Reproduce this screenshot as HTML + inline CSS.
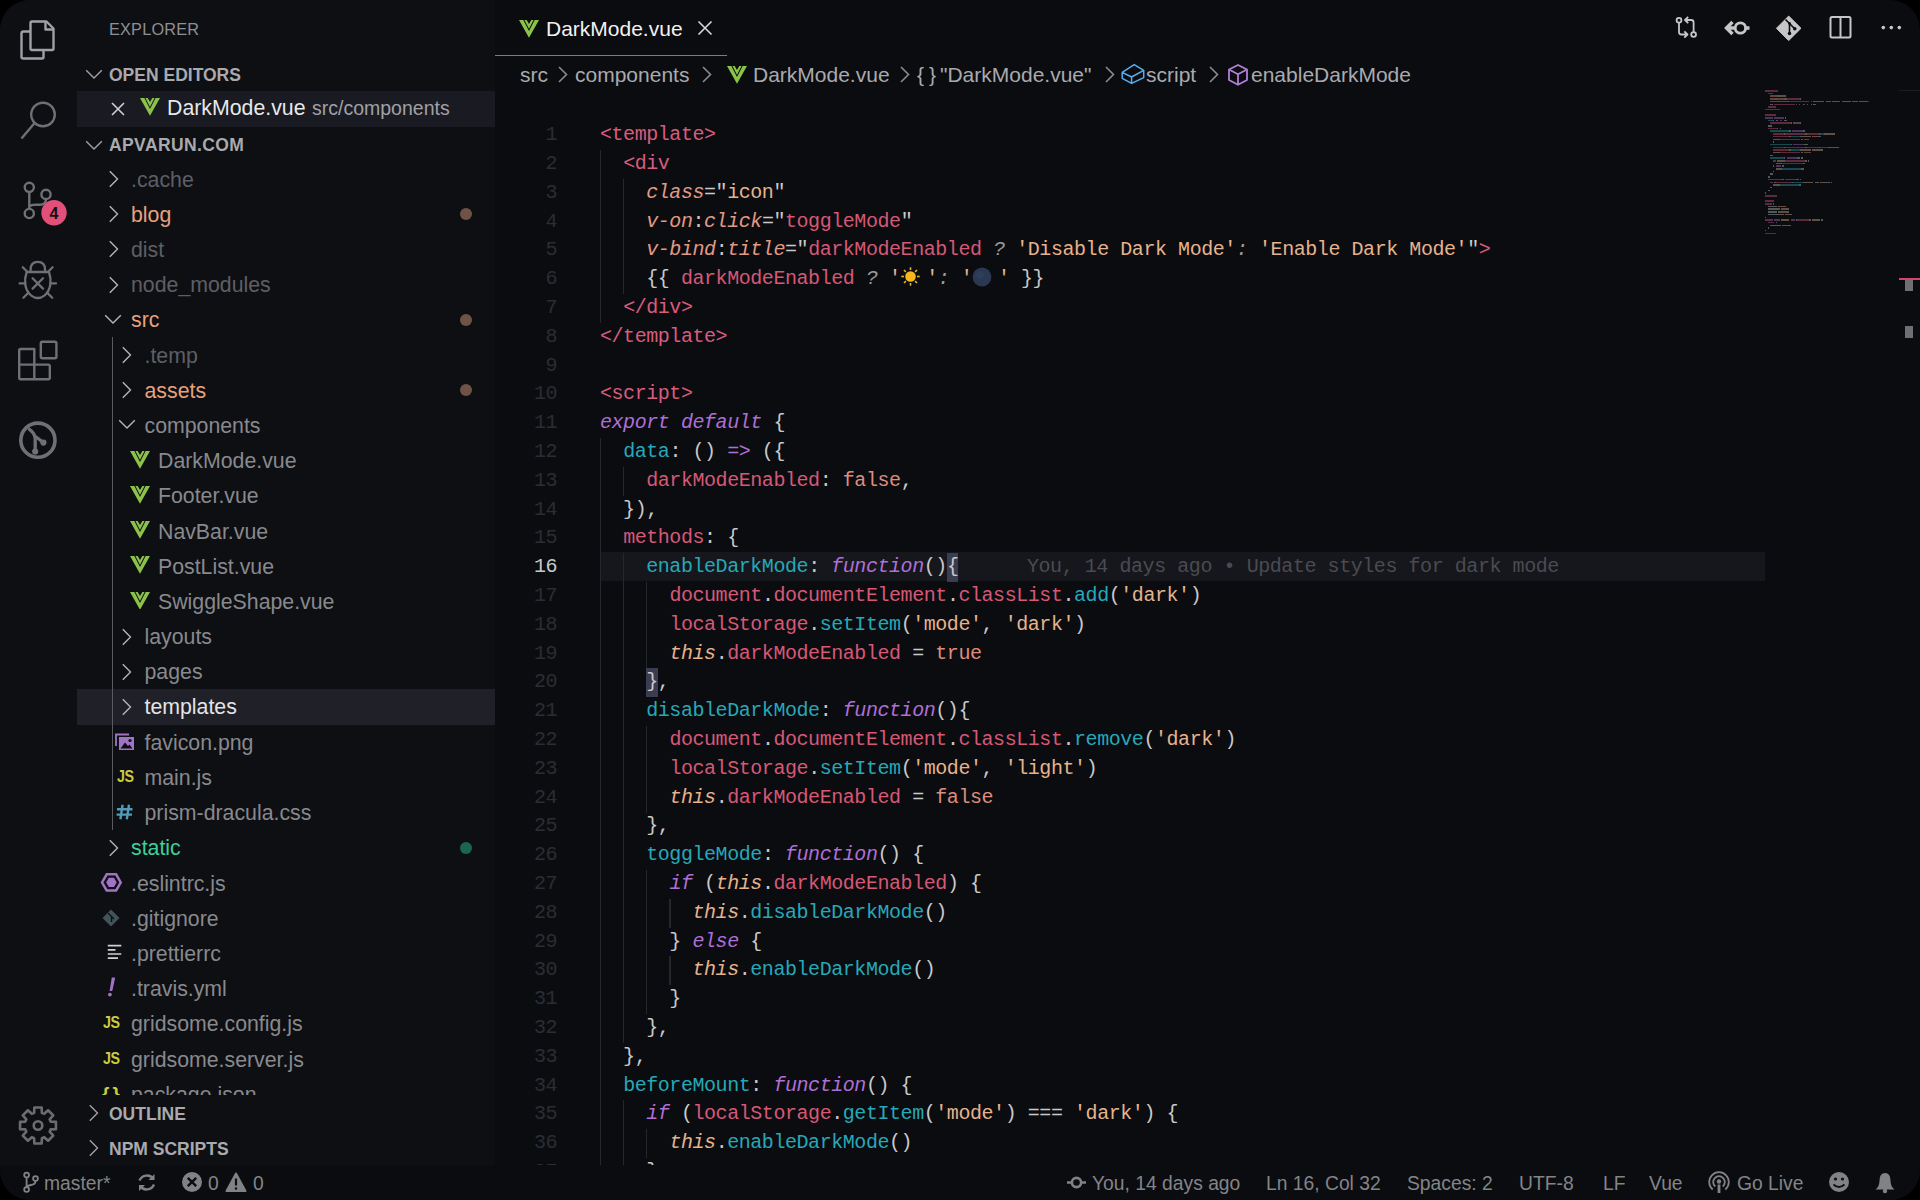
<!DOCTYPE html><html><head><meta charset="utf-8"><style>
*{box-sizing:border-box}
html,body{margin:0;padding:0;background:#000;width:1920px;height:1200px;overflow:hidden}
#win{position:absolute;left:0;top:0;width:1920px;height:1200px;border-radius:30px;overflow:hidden;background:#0b0c10;font-family:"Liberation Sans",sans-serif}
.abs{position:absolute}
#act{position:absolute;left:0;top:0;width:77px;height:1165px;background:#0e0f13}
#side{position:absolute;left:77px;top:0;width:417.6px;height:1165px;background:#0e0f13;overflow:hidden}
#status{position:absolute;left:0;top:1165px;width:1920px;height:35px;background:#0b0c0f;color:#838488;font-size:19.3px}
.row{position:absolute;left:0;width:418px;height:35.2px;line-height:35.2px;font-size:21.3px;white-space:nowrap;color:#88898d}
.hdr{position:absolute;left:0;width:418px;height:35.2px;line-height:35.2px;font-size:17.5px;font-weight:bold;color:#a9aaae;white-space:nowrap}
.ico{position:absolute}
.code{position:absolute;left:600px;top:0;font-family:"Liberation Mono",monospace;font-size:20px;letter-spacing:-0.44px;white-space:pre;color:#c9c9c9}
.ln{position:absolute;left:495px;width:62px;text-align:right;font-family:"Liberation Mono",monospace;font-size:20px;letter-spacing:-0.44px;color:#3b3c41}
.cl{position:absolute;left:0;height:28.8px;line-height:28.8px}
.t{color:#da5b7d}.a{color:#e39a84;font-style:italic}.p{color:#c9c9c9}.s{color:#e6b38c}.v{color:#d65876}
.k{color:#b06fd6;font-style:italic}.o{color:#b06fd6}.f{color:#26a8b8}.th{color:#e6b38c;font-style:italic}
.q{color:#9a9a9a;font-style:italic}.b{color:#de8d7c}
</style></head><body><div id="win">
<div id="act">
<svg class="abs" style="left:0;top:0" width="77" height="480" viewBox="0 0 77 480" fill="none" stroke-width="2.4">
 <g stroke="#a0a1a6" stroke-linejoin="round">
  <path d="M30.5 31.5 H23.5 Q21.5 31.5 21.5 33.5 V57 Q21.5 58.5 23.5 58.5 H42 Q43.5 58.5 43.5 57 V50.5"/>
  <path d="M32 21.5 H46.5 L53.5 28.5 V48.5 Q53.5 50 52 50 H32 Q30.5 50 30.5 48.5 V23 Q30.5 21.5 32 21.5 Z"/>
  <path d="M45.5 21.5 V29.5 H53.5"/>
 </g>
 <g stroke="#6f7075">
  <circle cx="43" cy="114.5" r="11.8"/>
  <path d="M34.6 123 L21.5 138.5"/>
  <circle cx="29.3" cy="187.3" r="4.6"/>
  <circle cx="46" cy="194.4" r="4.6"/>
  <circle cx="29.3" cy="213.5" r="4.6"/>
  <path d="M29.3 192 V209"/>
  <path d="M29.3 206.5 Q31 204.7 35 204.7 H40 Q46 204.7 46 199"/>
 </g>
 <circle cx="54" cy="212.7" r="12.7" fill="#e2507a"/>
 <text x="54" y="218.5" text-anchor="middle" font-family="Liberation Sans" font-size="16" font-weight="bold" fill="#111">4</text>
 <g stroke="#6f7075" stroke-linecap="round" stroke-width="2.3">
  <path d="M30.6 272 V269.5 Q30.6 261.8 37.8 261.8 Q45 261.8 45 269.5 V272"/>
  <path d="M26.7 272 H49 C51.8 280 51.2 290 44.3 295.6 C40.3 298.6 35.3 298.6 31.3 295.6 C24.4 290 23.8 280 26.7 272 Z" stroke-linejoin="round"/>
  <path d="M32.6 278.2 L43 288.6 M43 278.2 L32.6 288.6"/>
  <path d="M22.8 267.3 L27 271.5 M52.6 267.3 L48.4 271.5 M19.6 283.4 H25.2 M56 283.4 H50.4 M23.4 297.8 L28.4 292.8 M52.2 297.8 L47.2 292.8"/>
 </g>
 <g stroke="#6f7075" stroke-linejoin="round">
  <rect x="40.8" y="341.8" width="15.6" height="16.4" rx="1.5"/>
  <path d="M19.2 350.5 Q19.2 349 20.7 349 H34.3 V364.6 H48.3 Q49.8 364.6 49.8 366.1 V377.8 Q49.8 379.3 48.3 379.3 H20.7 Q19.2 379.3 19.2 377.8 Z"/>
  <path d="M19.2 364.6 H34.3 V379.3"/>
 </g>
 <g stroke="#6f7075">
  <circle cx="37.9" cy="440.2" r="17.1" stroke-width="3.6"/>
  <path d="M29.4 429.4 Q34.6 433 35.2 438.5 V451 M35.5 436.5 Q39.5 439.5 43.4 442.6" stroke-width="3.3" stroke-linecap="round"/>
 </g>
 <g fill="#6f7075">
  <circle cx="35.2" cy="451.5" r="3.1"/>
  <circle cx="43.4" cy="442.6" r="3.1"/>
 </g>
</svg>
<svg class="abs" style="left:0;top:1090px" width="77" height="70" viewBox="0 1090 77 70" fill="none" stroke="#6a6c70" stroke-width="2.6" stroke-linejoin="round"><path d="M34.10 1112.89 L34.36 1107.56 L41.64 1107.56 L41.90 1112.89 L44.16 1113.82 L48.11 1110.25 L53.25 1115.39 L49.68 1119.34 L50.61 1121.60 L55.94 1121.86 L55.94 1129.14 L50.61 1129.40 L49.68 1131.66 L53.25 1135.61 L48.11 1140.75 L44.16 1137.18 L41.90 1138.11 L41.64 1143.44 L34.36 1143.44 L34.10 1138.11 L31.84 1137.18 L27.89 1140.75 L22.75 1135.61 L26.32 1131.66 L25.39 1129.40 L20.06 1129.14 L20.06 1121.86 L25.39 1121.60 L26.32 1119.34 L22.75 1115.39 L27.89 1110.25 L31.84 1113.82Z"/><circle cx="38" cy="1125.5" r="4.3"/></svg>
</div>
<div id="side"><div class="abs" style="left:32px;top:19.5px;font-size:16.3px;color:#8e8f93;letter-spacing:0.2px">EXPLORER</div><div class="hdr" style="top:57.5px"><svg class="ico" style="left:8px;top:10.5px" width="18" height="12" viewBox="0 0 18 12"><path d="M1.2 2.2 L9 10 L16.8 2.2" fill="none" stroke="#a0a1a5" stroke-width="1.4"/></svg><span class="abs" style="left:32px">OPEN EDITORS</span></div><div class="row" style="top:90.9px;height:35.8px;background:#1a1a22;color:#e8e8e8"><svg class="ico" style="left:34px;top:11px" width="14" height="14" viewBox="0 0 14 14"><path d="M1 1 L13 13 M13 1 L1 13" stroke="#d0d0d0" stroke-width="1.6"/></svg><svg class="ico" style="left:63.4px;top:7.3px" width="20" height="17.75" viewBox="0 0 261.76 226.69" preserveAspectRatio="none"><path fill="#8bc34a" d="M161.096.001l-30.224 52.35L100.647.002H-.005L130.872 226.69 261.749 0z"/><path fill="none" stroke="#1a1b22" stroke-width="13" d="M62 -4 L130.872 128 L199.7 -4"/></svg><span class="abs" style="left:90px">DarkMode.vue</span><span class="abs" style="left:235px;color:#a0a1a5;font-size:19.5px">src/components</span></div><div class="hdr" style="top:128px"><svg class="ico" style="left:8px;top:11px" width="18" height="12" viewBox="0 0 18 12"><path d="M1.2 2.2 L9 10 L16.8 2.2" fill="none" stroke="#a0a1a5" stroke-width="1.4"/></svg><span class="abs" style="left:32px;letter-spacing:0.4px">APVARUN.COM</span></div><div class="abs" style="left:0;top:0;width:418px;height:1095px;overflow:hidden"><div class="row" style="top:161.5px;"><svg class="ico" style="left:30.5px;top:8.600000000000001px" width="12" height="18" viewBox="0 0 12 18"><path d="M1.8 1.2 L9.5 9 L1.8 16.8" fill="none" stroke="#b4b5b8" stroke-width="1.4"/></svg><span class="abs" style="left:54.0px;top:1px;color:#5d5f64">.cache</span></div><div class="row" style="top:196.7px;"><svg class="ico" style="left:30.5px;top:8.600000000000001px" width="12" height="18" viewBox="0 0 12 18"><path d="M1.8 1.2 L9.5 9 L1.8 16.8" fill="none" stroke="#b4b5b8" stroke-width="1.4"/></svg><span class="abs" style="left:54.0px;top:1px;color:#e8a17d">blog</span><div class="abs" style="left:383.3px;top:11.5px;width:12px;height:12px;border-radius:6px;background:#6f5446"></div></div><div class="row" style="top:231.9px;"><svg class="ico" style="left:30.5px;top:8.600000000000001px" width="12" height="18" viewBox="0 0 12 18"><path d="M1.8 1.2 L9.5 9 L1.8 16.8" fill="none" stroke="#b4b5b8" stroke-width="1.4"/></svg><span class="abs" style="left:54.0px;top:1px;color:#5d5f64">dist</span></div><div class="row" style="top:267.1px;"><svg class="ico" style="left:30.5px;top:8.600000000000001px" width="12" height="18" viewBox="0 0 12 18"><path d="M1.8 1.2 L9.5 9 L1.8 16.8" fill="none" stroke="#b4b5b8" stroke-width="1.4"/></svg><span class="abs" style="left:54.0px;top:1px;color:#5d5f64">node_modules</span></div><div class="row" style="top:302.3px;"><svg class="ico" style="left:27.0px;top:10.600000000000001px" width="18" height="12" viewBox="0 0 18 12"><path d="M1.2 2.2 L9 10 L16.8 2.2" fill="none" stroke="#b4b5b8" stroke-width="1.4"/></svg><span class="abs" style="left:54.0px;top:1px;color:#e8a17d">src</span><div class="abs" style="left:383.3px;top:11.5px;width:12px;height:12px;border-radius:6px;background:#6f5446"></div></div><div class="row" style="top:337.5px;"><svg class="ico" style="left:44.0px;top:8.600000000000001px" width="12" height="18" viewBox="0 0 12 18"><path d="M1.8 1.2 L9.5 9 L1.8 16.8" fill="none" stroke="#b4b5b8" stroke-width="1.4"/></svg><span class="abs" style="left:67.5px;top:1px;color:#5d5f64">.temp</span></div><div class="row" style="top:372.7px;"><svg class="ico" style="left:44.0px;top:8.600000000000001px" width="12" height="18" viewBox="0 0 12 18"><path d="M1.8 1.2 L9.5 9 L1.8 16.8" fill="none" stroke="#b4b5b8" stroke-width="1.4"/></svg><span class="abs" style="left:67.5px;top:1px;color:#e8a17d">assets</span><div class="abs" style="left:383.3px;top:11.5px;width:12px;height:12px;border-radius:6px;background:#6f5446"></div></div><div class="row" style="top:407.9px;"><svg class="ico" style="left:40.5px;top:10.600000000000001px" width="18" height="12" viewBox="0 0 18 12"><path d="M1.2 2.2 L9 10 L16.8 2.2" fill="none" stroke="#b4b5b8" stroke-width="1.4"/></svg><span class="abs" style="left:67.5px;top:1px;color:#88898d">components</span></div><div class="row" style="top:443.1px;"><svg class="ico" style="left:53.4px;top:7.8px" width="20" height="17.75" viewBox="0 0 261.76 226.69" preserveAspectRatio="none"><path fill="#8bc34a" d="M161.096.001l-30.224 52.35L100.647.002H-.005L130.872 226.69 261.749 0z"/><path fill="none" stroke="#0e0f13" stroke-width="13" d="M62 -4 L130.872 128 L199.7 -4"/></svg><span class="abs" style="left:81.0px;top:1px;color:#88898d">DarkMode.vue</span></div><div class="row" style="top:478.3px;"><svg class="ico" style="left:53.4px;top:7.8px" width="20" height="17.75" viewBox="0 0 261.76 226.69" preserveAspectRatio="none"><path fill="#8bc34a" d="M161.096.001l-30.224 52.35L100.647.002H-.005L130.872 226.69 261.749 0z"/><path fill="none" stroke="#0e0f13" stroke-width="13" d="M62 -4 L130.872 128 L199.7 -4"/></svg><span class="abs" style="left:81.0px;top:1px;color:#88898d">Footer.vue</span></div><div class="row" style="top:513.5px;"><svg class="ico" style="left:53.4px;top:7.8px" width="20" height="17.75" viewBox="0 0 261.76 226.69" preserveAspectRatio="none"><path fill="#8bc34a" d="M161.096.001l-30.224 52.35L100.647.002H-.005L130.872 226.69 261.749 0z"/><path fill="none" stroke="#0e0f13" stroke-width="13" d="M62 -4 L130.872 128 L199.7 -4"/></svg><span class="abs" style="left:81.0px;top:1px;color:#88898d">NavBar.vue</span></div><div class="row" style="top:548.7px;"><svg class="ico" style="left:53.4px;top:7.8px" width="20" height="17.75" viewBox="0 0 261.76 226.69" preserveAspectRatio="none"><path fill="#8bc34a" d="M161.096.001l-30.224 52.35L100.647.002H-.005L130.872 226.69 261.749 0z"/><path fill="none" stroke="#0e0f13" stroke-width="13" d="M62 -4 L130.872 128 L199.7 -4"/></svg><span class="abs" style="left:81.0px;top:1px;color:#88898d">PostList.vue</span></div><div class="row" style="top:583.9px;"><svg class="ico" style="left:53.4px;top:7.8px" width="20" height="17.75" viewBox="0 0 261.76 226.69" preserveAspectRatio="none"><path fill="#8bc34a" d="M161.096.001l-30.224 52.35L100.647.002H-.005L130.872 226.69 261.749 0z"/><path fill="none" stroke="#0e0f13" stroke-width="13" d="M62 -4 L130.872 128 L199.7 -4"/></svg><span class="abs" style="left:81.0px;top:1px;color:#88898d">SwiggleShape.vue</span></div><div class="row" style="top:619.1px;"><svg class="ico" style="left:44.0px;top:8.600000000000001px" width="12" height="18" viewBox="0 0 12 18"><path d="M1.8 1.2 L9.5 9 L1.8 16.8" fill="none" stroke="#b4b5b8" stroke-width="1.4"/></svg><span class="abs" style="left:67.5px;top:1px;color:#88898d">layouts</span></div><div class="row" style="top:654.3px;"><svg class="ico" style="left:44.0px;top:8.600000000000001px" width="12" height="18" viewBox="0 0 12 18"><path d="M1.8 1.2 L9.5 9 L1.8 16.8" fill="none" stroke="#b4b5b8" stroke-width="1.4"/></svg><span class="abs" style="left:67.5px;top:1px;color:#88898d">pages</span></div><div class="row" style="top:689.5px;background:#202029;height:36.2px;margin-top:-0.6px;"><svg class="ico" style="left:44.0px;top:8.600000000000001px" width="12" height="18" viewBox="0 0 12 18"><path d="M1.8 1.2 L9.5 9 L1.8 16.8" fill="none" stroke="#b4b5b8" stroke-width="1.4"/></svg><span class="abs" style="left:67.5px;top:1px;color:#e4e4e6">templates</span></div><div class="row" style="top:724.7px;"><svg class="ico" style="left:37.5px;top:8px" width="20" height="18" viewBox="0 0 20 18"><path d="M1 13 V1.5 H14" fill="none" stroke="#a074c4" stroke-width="1.8"/><rect x="4" y="4" width="15" height="13" fill="#a074c4"/><path d="M5.5 15.5 L10 9.5 L13 13 L14.5 11.5 L17.5 15.5 Z" fill="#0e0f13"/><circle cx="15" cy="7.5" r="1.6" fill="#0e0f13"/></svg><span class="abs" style="left:67.5px;top:1px;color:#88898d">favicon.png</span></div><div class="row" style="top:759.9px;"><span class="abs" style="left:39.5px;top:-1px;font-size:17px;font-weight:bold;color:#cbcb41;letter-spacing:-0.5px;transform:scaleX(0.84);transform-origin:0 0">JS</span><span class="abs" style="left:67.5px;top:1px;color:#88898d">main.js</span></div><div class="row" style="top:795.1px;"><svg class="ico" style="left:39px;top:9px" width="18" height="16" viewBox="0 0 18 16" stroke="#519aba" stroke-width="2.4"><path d="M6.6 0.8 L4.4 15.2 M13 0.8 L10.8 15.2 M1 5.3 H16.5 M0.6 10.6 H16"/></svg><span class="abs" style="left:67.5px;top:1px;color:#88898d">prism-dracula.css</span></div><div class="row" style="top:830.3px;"><svg class="ico" style="left:30.5px;top:8.600000000000001px" width="12" height="18" viewBox="0 0 12 18"><path d="M1.8 1.2 L9.5 9 L1.8 16.8" fill="none" stroke="#b4b5b8" stroke-width="1.4"/></svg><span class="abs" style="left:54.0px;top:1px;color:#3ecf98">static</span><div class="abs" style="left:383.3px;top:11.5px;width:12px;height:12px;border-radius:6px;background:#1c664d"></div></div><div class="row" style="top:865.5px;"><svg class="ico" style="left:22px;top:4px" width="24" height="24" viewBox="0 0 24 24"><polygon points="23.20,12.40 17.80,21.75 7.00,21.75 1.60,12.40 7.00,3.05 17.80,3.05" fill="#a074c4"/><polygon points="19.00,12.40 15.70,18.12 9.10,18.12 5.80,12.40 9.10,6.68 15.70,6.68" fill="none" stroke="#0e0f13" stroke-width="2.3"/></svg><span class="abs" style="left:54.0px;top:1px;color:#88898d">.eslintrc.js</span></div><div class="row" style="top:900.7px;"><svg class="ico" style="left:25.0px;top:8px" width="18" height="18" viewBox="0 0 18 18"><path d="M9 0.5 L17.5 9 L9 17.5 L0.5 9Z" fill="#41535b"/><path d="M6 4 L9.5 7.5 V13 M9.5 7.5 L12 10" stroke="#0e0f13" stroke-width="1.4" fill="none"/></svg><span class="abs" style="left:54.0px;top:1px;color:#88898d">.gitignore</span></div><div class="row" style="top:935.9px;"><svg class="ico" style="left:30px;top:8px" width="16" height="16" viewBox="0 0 16 16" stroke="#d0d0d0" stroke-width="1.7"><path d="M0.8 1.6 H14.3 M0.8 5.8 H8.5 M0.8 10 H14.3 M0.8 14.2 H11"/></svg><span class="abs" style="left:54.0px;top:1px;color:#88898d">.prettierrc</span></div><div class="row" style="top:971.1px;"><svg class="ico" style="left:29px;top:5px" width="12" height="22" viewBox="0 0 12 22"><polygon points="5.8,1.5 9.2,1.5 6.3,15 3.6,15" fill="#a074c4"/><circle cx="3.9" cy="18.6" r="1.9" fill="#a074c4"/></svg><span class="abs" style="left:54.0px;top:1px;color:#88898d">.travis.yml</span></div><div class="row" style="top:1006.3px;"><span class="abs" style="left:26.0px;top:-1px;font-size:17px;font-weight:bold;color:#cbcb41;letter-spacing:-0.5px;transform:scaleX(0.84);transform-origin:0 0">JS</span><span class="abs" style="left:54.0px;top:1px;color:#88898d">gridsome.config.js</span></div><div class="row" style="top:1041.5px;"><span class="abs" style="left:26.0px;top:-1px;font-size:17px;font-weight:bold;color:#cbcb41;letter-spacing:-0.5px;transform:scaleX(0.84);transform-origin:0 0">JS</span><span class="abs" style="left:54.0px;top:1px;color:#88898d">gridsome.server.js</span></div><div class="row" style="top:1076.7px;"><span class="abs" style="left:25.0px;top:-1px;font-size:19px;font-weight:bold;color:#cbcb41;letter-spacing:3px">{}</span><span class="abs" style="left:54.0px;top:1px;color:#88898d">package.json</span></div><div class="abs" style="left:35px;top:337px;width:1.3px;height:493px;background:#5a5b60"></div></div><div class="hdr" style="top:1095px;background:#0e0f13;padding-top:2px"><svg class="ico" style="left:10.5px;top:8.5px" width="12" height="18" viewBox="0 0 12 18"><path d="M1.8 1.2 L9.5 9 L1.8 16.8" fill="none" stroke="#a0a1a5" stroke-width="1.4"/></svg><span class="abs" style="left:32px">OUTLINE</span></div><div class="hdr" style="top:1130px;background:#0e0f13;padding-top:2px"><svg class="ico" style="left:10.5px;top:8.5px" width="12" height="18" viewBox="0 0 12 18"><path d="M1.8 1.2 L9.5 9 L1.8 16.8" fill="none" stroke="#a0a1a5" stroke-width="1.4"/></svg><span class="abs" style="left:32px">NPM SCRIPTS</span></div></div><div class="abs" style="left:495px;top:0;width:232px;height:56px"><svg class="ico" style="left:24.4px;top:19.8px" width="20" height="17.75" viewBox="0 0 261.76 226.69" preserveAspectRatio="none"><path fill="#8bc34a" d="M161.096.001l-30.224 52.35L100.647.002H-.005L130.872 226.69 261.749 0z"/><path fill="none" stroke="#0b0c10" stroke-width="13" d="M62 -4 L130.872 128 L199.7 -4"/></svg><span class="abs" style="left:51px;top:15px;font-size:21px;color:#f2f2f2;line-height:28px">DarkMode.vue</span><svg class="ico" style="left:202px;top:20px" width="16" height="16" viewBox="0 0 16 16"><path d="M1.5 1.5 L14.5 14.5 M14.5 1.5 L1.5 14.5" stroke="#d8d8d8" stroke-width="1.6"/></svg><div class="abs" style="left:0;top:54.6px;width:232px;height:1.7px;background:#e5497a"></div></div><div class="abs" style="left:0;top:62px;font-size:21px;color:#a9aaae;line-height:26px;white-space:nowrap"><span class="abs" style="left:520px">src</span><svg class="ico" style="left:557px;top:2px" width="12" height="20" viewBox="0 0 12 20"><path d="M2 3 L9.5 10.5 L2 18" fill="none" stroke="#8a8b90" stroke-width="1.6"/></svg><span class="abs" style="left:575px">components</span><svg class="ico" style="left:701px;top:2px" width="12" height="20" viewBox="0 0 12 20"><path d="M2 3 L9.5 10.5 L2 18" fill="none" stroke="#8a8b90" stroke-width="1.6"/></svg></div><svg class="ico" style="left:727.4px;top:65.8px" width="20" height="17.75" viewBox="0 0 261.76 226.69" preserveAspectRatio="none"><path fill="#8bc34a" d="M161.096.001l-30.224 52.35L100.647.002H-.005L130.872 226.69 261.749 0z"/><path fill="none" stroke="#0b0c10" stroke-width="13" d="M62 -4 L130.872 128 L199.7 -4"/></svg><div class="abs" style="left:0;top:62px;font-size:21px;color:#a9aaae;line-height:26px;white-space:nowrap"><span class="abs" style="left:753px">DarkMode.vue</span><svg class="ico" style="left:899px;top:2px" width="12" height="20" viewBox="0 0 12 20"><path d="M2 3 L9.5 10.5 L2 18" fill="none" stroke="#8a8b90" stroke-width="1.6"/></svg><span class="abs" style="left:917px;letter-spacing:5px">{</span><span class="abs" style="left:929px">}</span><span class="abs" style="left:940px">"DarkMode.vue"</span><svg class="ico" style="left:1104px;top:2px" width="12" height="20" viewBox="0 0 12 20"><path d="M2 3 L9.5 10.5 L2 18" fill="none" stroke="#8a8b90" stroke-width="1.6"/></svg></div><svg class="ico" style="left:1115px;top:58px" width="36" height="32" viewBox="1115 58 36 32" fill="none" stroke="#5aaef0" stroke-width="1.5" stroke-linejoin="round"><path d="M1122.2 72.3 L1134.2 64.6 L1143.7 70.4 L1131.6 77 Z M1122.2 72.3 V78.3 L1131.6 83.4 L1143.7 77.6 V70.4 M1131.6 77 V83.4"/></svg><div class="abs" style="left:0;top:62px;font-size:21px;color:#a9aaae;line-height:26px;white-space:nowrap"><span class="abs" style="left:1146px">script</span><svg class="ico" style="left:1208px;top:2px" width="12" height="20" viewBox="0 0 12 20"><path d="M2 3 L9.5 10.5 L2 18" fill="none" stroke="#8a8b90" stroke-width="1.6"/></svg><span class="abs" style="left:1251px">enableDarkMode</span></div><svg class="ico" style="left:1227px;top:63px" width="22" height="24" viewBox="0 0 22 24" fill="none" stroke="#b180d7" stroke-width="1.8" stroke-linejoin="round"><path d="M11 2 L20 6.5 V17 L11 21.8 L2 17 V6.5 Z"/><path d="M2 6.5 L11 11.2 L20 6.5 M11 11.2 V21.8"/></svg><div class="abs" style="left:495px;top:100px;width:1425px;height:1065px;overflow:hidden"><div class="abs" style="left:-495px;top:-100px;width:1920px;height:1200px"><div class="abs" style="left:600px;top:552.1px;width:1165px;height:29.400000000000002px;background:#16171c"></div><div class="abs" style="left:600.0px;top:149.9px;width:1.2px;height:29.0px;background:#26272d"></div><div class="abs" style="left:600.0px;top:178.7px;width:1.2px;height:29.0px;background:#26272d"></div><div class="abs" style="left:623.1px;top:178.7px;width:1.2px;height:29.0px;background:#26272d"></div><div class="abs" style="left:600.0px;top:207.5px;width:1.2px;height:29.0px;background:#26272d"></div><div class="abs" style="left:623.1px;top:207.5px;width:1.2px;height:29.0px;background:#26272d"></div><div class="abs" style="left:600.0px;top:236.3px;width:1.2px;height:29.0px;background:#26272d"></div><div class="abs" style="left:623.1px;top:236.3px;width:1.2px;height:29.0px;background:#26272d"></div><div class="abs" style="left:600.0px;top:265.1px;width:1.2px;height:29.0px;background:#26272d"></div><div class="abs" style="left:623.1px;top:265.1px;width:1.2px;height:29.0px;background:#26272d"></div><div class="abs" style="left:600.0px;top:293.9px;width:1.2px;height:29.0px;background:#26272d"></div><div class="abs" style="left:600.0px;top:437.9px;width:1.2px;height:29.0px;background:#26272d"></div><div class="abs" style="left:600.0px;top:466.7px;width:1.2px;height:29.0px;background:#26272d"></div><div class="abs" style="left:623.1px;top:466.7px;width:1.2px;height:29.0px;background:#26272d"></div><div class="abs" style="left:600.0px;top:495.5px;width:1.2px;height:29.0px;background:#26272d"></div><div class="abs" style="left:600.0px;top:524.3px;width:1.2px;height:29.0px;background:#26272d"></div><div class="abs" style="left:600.0px;top:553.1px;width:1.2px;height:29.0px;background:#26272d"></div><div class="abs" style="left:623.1px;top:553.1px;width:1.2px;height:29.0px;background:#26272d"></div><div class="abs" style="left:600.0px;top:581.9px;width:1.2px;height:29.0px;background:#26272d"></div><div class="abs" style="left:623.1px;top:581.9px;width:1.2px;height:29.0px;background:#26272d"></div><div class="abs" style="left:646.2px;top:581.9px;width:1.2px;height:29.0px;background:#26272d"></div><div class="abs" style="left:600.0px;top:610.7px;width:1.2px;height:29.0px;background:#26272d"></div><div class="abs" style="left:623.1px;top:610.7px;width:1.2px;height:29.0px;background:#26272d"></div><div class="abs" style="left:646.2px;top:610.7px;width:1.2px;height:29.0px;background:#26272d"></div><div class="abs" style="left:600.0px;top:639.5px;width:1.2px;height:29.0px;background:#26272d"></div><div class="abs" style="left:623.1px;top:639.5px;width:1.2px;height:29.0px;background:#26272d"></div><div class="abs" style="left:646.2px;top:639.5px;width:1.2px;height:29.0px;background:#26272d"></div><div class="abs" style="left:600.0px;top:668.3px;width:1.2px;height:29.0px;background:#26272d"></div><div class="abs" style="left:623.1px;top:668.3px;width:1.2px;height:29.0px;background:#26272d"></div><div class="abs" style="left:600.0px;top:697.1px;width:1.2px;height:29.0px;background:#26272d"></div><div class="abs" style="left:623.1px;top:697.1px;width:1.2px;height:29.0px;background:#26272d"></div><div class="abs" style="left:600.0px;top:725.9px;width:1.2px;height:29.0px;background:#26272d"></div><div class="abs" style="left:623.1px;top:725.9px;width:1.2px;height:29.0px;background:#26272d"></div><div class="abs" style="left:646.2px;top:725.9px;width:1.2px;height:29.0px;background:#26272d"></div><div class="abs" style="left:600.0px;top:754.7px;width:1.2px;height:29.0px;background:#26272d"></div><div class="abs" style="left:623.1px;top:754.7px;width:1.2px;height:29.0px;background:#26272d"></div><div class="abs" style="left:646.2px;top:754.7px;width:1.2px;height:29.0px;background:#26272d"></div><div class="abs" style="left:600.0px;top:783.5px;width:1.2px;height:29.0px;background:#26272d"></div><div class="abs" style="left:623.1px;top:783.5px;width:1.2px;height:29.0px;background:#26272d"></div><div class="abs" style="left:646.2px;top:783.5px;width:1.2px;height:29.0px;background:#26272d"></div><div class="abs" style="left:600.0px;top:812.3px;width:1.2px;height:29.0px;background:#26272d"></div><div class="abs" style="left:623.1px;top:812.3px;width:1.2px;height:29.0px;background:#26272d"></div><div class="abs" style="left:600.0px;top:841.1px;width:1.2px;height:29.0px;background:#26272d"></div><div class="abs" style="left:623.1px;top:841.1px;width:1.2px;height:29.0px;background:#26272d"></div><div class="abs" style="left:600.0px;top:869.9px;width:1.2px;height:29.0px;background:#26272d"></div><div class="abs" style="left:623.1px;top:869.9px;width:1.2px;height:29.0px;background:#26272d"></div><div class="abs" style="left:646.2px;top:869.9px;width:1.2px;height:29.0px;background:#26272d"></div><div class="abs" style="left:600.0px;top:898.7px;width:1.2px;height:29.0px;background:#26272d"></div><div class="abs" style="left:623.1px;top:898.7px;width:1.2px;height:29.0px;background:#26272d"></div><div class="abs" style="left:646.2px;top:898.7px;width:1.2px;height:29.0px;background:#26272d"></div><div class="abs" style="left:669.4px;top:898.7px;width:1.2px;height:29.0px;background:#26272d"></div><div class="abs" style="left:600.0px;top:927.5px;width:1.2px;height:29.0px;background:#26272d"></div><div class="abs" style="left:623.1px;top:927.5px;width:1.2px;height:29.0px;background:#26272d"></div><div class="abs" style="left:646.2px;top:927.5px;width:1.2px;height:29.0px;background:#26272d"></div><div class="abs" style="left:600.0px;top:956.3px;width:1.2px;height:29.0px;background:#26272d"></div><div class="abs" style="left:623.1px;top:956.3px;width:1.2px;height:29.0px;background:#26272d"></div><div class="abs" style="left:646.2px;top:956.3px;width:1.2px;height:29.0px;background:#26272d"></div><div class="abs" style="left:669.4px;top:956.3px;width:1.2px;height:29.0px;background:#26272d"></div><div class="abs" style="left:600.0px;top:985.1px;width:1.2px;height:29.0px;background:#26272d"></div><div class="abs" style="left:623.1px;top:985.1px;width:1.2px;height:29.0px;background:#26272d"></div><div class="abs" style="left:646.2px;top:985.1px;width:1.2px;height:29.0px;background:#26272d"></div><div class="abs" style="left:600.0px;top:1013.9px;width:1.2px;height:29.0px;background:#26272d"></div><div class="abs" style="left:623.1px;top:1013.9px;width:1.2px;height:29.0px;background:#26272d"></div><div class="abs" style="left:600.0px;top:1042.7px;width:1.2px;height:29.0px;background:#26272d"></div><div class="abs" style="left:600.0px;top:1071.5px;width:1.2px;height:29.0px;background:#26272d"></div><div class="abs" style="left:600.0px;top:1100.3px;width:1.2px;height:29.0px;background:#26272d"></div><div class="abs" style="left:623.1px;top:1100.3px;width:1.2px;height:29.0px;background:#26272d"></div><div class="abs" style="left:600.0px;top:1129.1px;width:1.2px;height:29.0px;background:#26272d"></div><div class="abs" style="left:623.1px;top:1129.1px;width:1.2px;height:29.0px;background:#26272d"></div><div class="abs" style="left:646.2px;top:1129.1px;width:1.2px;height:29.0px;background:#26272d"></div><div class="abs" style="left:600.0px;top:1157.9px;width:1.2px;height:29.0px;background:#26272d"></div><div class="abs" style="left:623.1px;top:1157.9px;width:1.2px;height:29.0px;background:#26272d"></div><div class="abs" style="left:600.0px;top:1186.7px;width:1.2px;height:29.0px;background:#26272d"></div><div class="ln" style="top:121.1px;height:28.8px;line-height:28.8px;color:#2c2d32">1</div><div class="code" style="top:121.1px;height:28.8px;line-height:28.8px"><span class="t">&lt;template&gt;</span></div><div class="ln" style="top:149.9px;height:28.8px;line-height:28.8px;color:#2c2d32">2</div><div class="code" style="top:149.9px;height:28.8px;line-height:28.8px"><span class="p">  </span><span class="t">&lt;div</span></div><div class="ln" style="top:178.7px;height:28.8px;line-height:28.8px;color:#2c2d32">3</div><div class="code" style="top:178.7px;height:28.8px;line-height:28.8px"><span class="p">    </span><span class="a">class</span><span class="p">=&quot;</span><span class="s">icon</span><span class="p">&quot;</span></div><div class="ln" style="top:207.5px;height:28.8px;line-height:28.8px;color:#2c2d32">4</div><div class="code" style="top:207.5px;height:28.8px;line-height:28.8px"><span class="p">    </span><span class="a">v-on</span><span class="p">:</span><span class="a">click</span><span class="p">=&quot;</span><span class="v">toggleMode</span><span class="p">&quot;</span></div><div class="ln" style="top:236.3px;height:28.8px;line-height:28.8px;color:#2c2d32">5</div><div class="code" style="top:236.3px;height:28.8px;line-height:28.8px"><span class="p">    </span><span class="a">v-bind</span><span class="p">:</span><span class="a">title</span><span class="p">=&quot;</span><span class="v">darkModeEnabled</span><span class="p"> </span><span class="q">?</span><span class="p"> </span><span class="s">&#x27;Disable Dark Mode&#x27;</span><span class="q">:</span><span class="p"> </span><span class="s">&#x27;Enable Dark Mode&#x27;</span><span class="p">&quot;</span><span class="t">&gt;</span></div><div class="ln" style="top:265.1px;height:28.8px;line-height:28.8px;color:#2c2d32">6</div><div class="code" style="top:265.1px;height:28.8px;line-height:28.8px"><span class="p">    {{ </span><span class="v">darkModeEnabled</span><span class="p"> </span><span class="q">?</span><span class="p"> </span><span class="s">&#x27;</span><span style="display:inline-block;width:25.5px;position:relative;vertical-align:top;height:28.8px"><svg style="position:absolute;left:0px;top:2.3px" width="19" height="19" viewBox="-9.5 -9.5 19 19"><g stroke="#f0b020" stroke-width="1.6"><line x1="6.50" y1="0.00" x2="9.20" y2="0.00"/><line x1="4.60" y1="4.60" x2="6.51" y2="6.51"/><line x1="0.00" y1="6.50" x2="0.00" y2="9.20"/><line x1="-4.60" y1="4.60" x2="-6.51" y2="6.51"/><line x1="-6.50" y1="0.00" x2="-9.20" y2="0.00"/><line x1="-4.60" y1="-4.60" x2="-6.51" y2="-6.51"/><line x1="-0.00" y1="-6.50" x2="-0.00" y2="-9.20"/><line x1="4.60" y1="-4.60" x2="6.51" y2="-6.51"/></g><circle r="5.3" fill="#f6b81c"/></svg></span><span class="s">&#x27;</span><span class="q">:</span><span class="p"> </span><span class="s">&#x27;</span><span style="display:inline-block;width:25.5px;position:relative;vertical-align:top;height:28.8px"><svg style="position:absolute;left:-0.5px;top:1.6px" width="20" height="20" viewBox="0 0 20 20"><circle cx="10" cy="10" r="9.4" fill="#2a3852"/><circle cx="8" cy="8" r="4" fill="#34445f" opacity="0.5"/></svg></span><span class="s">&#x27;</span><span class="p"> }}</span></div><div class="ln" style="top:293.9px;height:28.8px;line-height:28.8px;color:#2c2d32">7</div><div class="code" style="top:293.9px;height:28.8px;line-height:28.8px"><span class="p">  </span><span class="t">&lt;/div&gt;</span></div><div class="ln" style="top:322.7px;height:28.8px;line-height:28.8px;color:#2c2d32">8</div><div class="code" style="top:322.7px;height:28.8px;line-height:28.8px"><span class="t">&lt;/template&gt;</span></div><div class="ln" style="top:351.5px;height:28.8px;line-height:28.8px;color:#2c2d32">9</div><div class="code" style="top:351.5px;height:28.8px;line-height:28.8px"></div><div class="ln" style="top:380.3px;height:28.8px;line-height:28.8px;color:#2c2d32">10</div><div class="code" style="top:380.3px;height:28.8px;line-height:28.8px"><span class="t">&lt;script&gt;</span></div><div class="ln" style="top:409.1px;height:28.8px;line-height:28.8px;color:#2c2d32">11</div><div class="code" style="top:409.1px;height:28.8px;line-height:28.8px"><span class="k">export</span><span class="p"> </span><span class="k">default</span><span class="p"> {</span></div><div class="ln" style="top:437.9px;height:28.8px;line-height:28.8px;color:#2c2d32">12</div><div class="code" style="top:437.9px;height:28.8px;line-height:28.8px"><span class="p">  </span><span class="f">data</span><span class="p">: () </span><span class="o">=&gt;</span><span class="p"> ({</span></div><div class="ln" style="top:466.7px;height:28.8px;line-height:28.8px;color:#2c2d32">13</div><div class="code" style="top:466.7px;height:28.8px;line-height:28.8px"><span class="p">    </span><span class="v">darkModeEnabled</span><span class="p">: </span><span class="b">false</span><span class="p">,</span></div><div class="ln" style="top:495.5px;height:28.8px;line-height:28.8px;color:#2c2d32">14</div><div class="code" style="top:495.5px;height:28.8px;line-height:28.8px"><span class="p">  }),</span></div><div class="ln" style="top:524.3px;height:28.8px;line-height:28.8px;color:#2c2d32">15</div><div class="code" style="top:524.3px;height:28.8px;line-height:28.8px"><span class="p">  </span><span class="v">methods</span><span class="p">: {</span></div><div class="ln" style="top:553.1px;height:28.8px;line-height:28.8px;color:#c9c9c9">16</div><div class="code" style="top:553.1px;height:28.8px;line-height:28.8px"><span class="p">    </span><span class="f">enableDarkMode</span><span class="p">: </span><span class="k">function</span><span class="p">()</span><span style="background:#3a3d52;display:inline-block;height:28.8px;vertical-align:top">{</span></div><div class="ln" style="top:581.9px;height:28.8px;line-height:28.8px;color:#2c2d32">17</div><div class="code" style="top:581.9px;height:28.8px;line-height:28.8px"><span class="p">      </span><span class="v">document</span><span class="p">.</span><span class="v">documentElement</span><span class="p">.</span><span class="v">classList</span><span class="p">.</span><span class="f">add</span><span class="p">(</span><span class="s">&#x27;dark&#x27;</span><span class="p">)</span></div><div class="ln" style="top:610.7px;height:28.8px;line-height:28.8px;color:#2c2d32">18</div><div class="code" style="top:610.7px;height:28.8px;line-height:28.8px"><span class="p">      </span><span class="v">localStorage</span><span class="p">.</span><span class="f">setItem</span><span class="p">(</span><span class="s">&#x27;mode&#x27;</span><span class="p">, </span><span class="s">&#x27;dark&#x27;</span><span class="p">)</span></div><div class="ln" style="top:639.5px;height:28.8px;line-height:28.8px;color:#2c2d32">19</div><div class="code" style="top:639.5px;height:28.8px;line-height:28.8px"><span class="p">      </span><span class="th">this</span><span class="p">.</span><span class="v">darkModeEnabled</span><span class="p"> = </span><span class="b">true</span></div><div class="ln" style="top:668.3px;height:28.8px;line-height:28.8px;color:#2c2d32">20</div><div class="code" style="top:668.3px;height:28.8px;line-height:28.8px"><span class="p">    </span><span style="background:#3a3d52;display:inline-block;height:28.8px;vertical-align:top">}</span><span class="p">,</span></div><div class="ln" style="top:697.1px;height:28.8px;line-height:28.8px;color:#2c2d32">21</div><div class="code" style="top:697.1px;height:28.8px;line-height:28.8px"><span class="p">    </span><span class="f">disableDarkMode</span><span class="p">: </span><span class="k">function</span><span class="p">(){</span></div><div class="ln" style="top:725.9px;height:28.8px;line-height:28.8px;color:#2c2d32">22</div><div class="code" style="top:725.9px;height:28.8px;line-height:28.8px"><span class="p">      </span><span class="v">document</span><span class="p">.</span><span class="v">documentElement</span><span class="p">.</span><span class="v">classList</span><span class="p">.</span><span class="f">remove</span><span class="p">(</span><span class="s">&#x27;dark&#x27;</span><span class="p">)</span></div><div class="ln" style="top:754.7px;height:28.8px;line-height:28.8px;color:#2c2d32">23</div><div class="code" style="top:754.7px;height:28.8px;line-height:28.8px"><span class="p">      </span><span class="v">localStorage</span><span class="p">.</span><span class="f">setItem</span><span class="p">(</span><span class="s">&#x27;mode&#x27;</span><span class="p">, </span><span class="s">&#x27;light&#x27;</span><span class="p">)</span></div><div class="ln" style="top:783.5px;height:28.8px;line-height:28.8px;color:#2c2d32">24</div><div class="code" style="top:783.5px;height:28.8px;line-height:28.8px"><span class="p">      </span><span class="th">this</span><span class="p">.</span><span class="v">darkModeEnabled</span><span class="p"> = </span><span class="b">false</span></div><div class="ln" style="top:812.3px;height:28.8px;line-height:28.8px;color:#2c2d32">25</div><div class="code" style="top:812.3px;height:28.8px;line-height:28.8px"><span class="p">    },</span></div><div class="ln" style="top:841.1px;height:28.8px;line-height:28.8px;color:#2c2d32">26</div><div class="code" style="top:841.1px;height:28.8px;line-height:28.8px"><span class="p">    </span><span class="f">toggleMode</span><span class="p">: </span><span class="k">function</span><span class="p">() {</span></div><div class="ln" style="top:869.9px;height:28.8px;line-height:28.8px;color:#2c2d32">27</div><div class="code" style="top:869.9px;height:28.8px;line-height:28.8px"><span class="p">      </span><span class="k">if</span><span class="p"> (</span><span class="th">this</span><span class="p">.</span><span class="v">darkModeEnabled</span><span class="p">) {</span></div><div class="ln" style="top:898.7px;height:28.8px;line-height:28.8px;color:#2c2d32">28</div><div class="code" style="top:898.7px;height:28.8px;line-height:28.8px"><span class="p">        </span><span class="th">this</span><span class="p">.</span><span class="f">disableDarkMode</span><span class="p">()</span></div><div class="ln" style="top:927.5px;height:28.8px;line-height:28.8px;color:#2c2d32">29</div><div class="code" style="top:927.5px;height:28.8px;line-height:28.8px"><span class="p">      } </span><span class="k">else</span><span class="p"> {</span></div><div class="ln" style="top:956.3px;height:28.8px;line-height:28.8px;color:#2c2d32">30</div><div class="code" style="top:956.3px;height:28.8px;line-height:28.8px"><span class="p">        </span><span class="th">this</span><span class="p">.</span><span class="f">enableDarkMode</span><span class="p">()</span></div><div class="ln" style="top:985.1px;height:28.8px;line-height:28.8px;color:#2c2d32">31</div><div class="code" style="top:985.1px;height:28.8px;line-height:28.8px"><span class="p">      }</span></div><div class="ln" style="top:1013.9px;height:28.8px;line-height:28.8px;color:#2c2d32">32</div><div class="code" style="top:1013.9px;height:28.8px;line-height:28.8px"><span class="p">    },</span></div><div class="ln" style="top:1042.7px;height:28.8px;line-height:28.8px;color:#2c2d32">33</div><div class="code" style="top:1042.7px;height:28.8px;line-height:28.8px"><span class="p">  },</span></div><div class="ln" style="top:1071.5px;height:28.8px;line-height:28.8px;color:#2c2d32">34</div><div class="code" style="top:1071.5px;height:28.8px;line-height:28.8px"><span class="p">  </span><span class="f">beforeMount</span><span class="p">: </span><span class="k">function</span><span class="p">() {</span></div><div class="ln" style="top:1100.3px;height:28.8px;line-height:28.8px;color:#2c2d32">35</div><div class="code" style="top:1100.3px;height:28.8px;line-height:28.8px"><span class="p">    </span><span class="k">if</span><span class="p"> (</span><span class="v">localStorage</span><span class="p">.</span><span class="f">getItem</span><span class="p">(</span><span class="s">&#x27;mode&#x27;</span><span class="p">) === </span><span class="s">&#x27;dark&#x27;</span><span class="p">) {</span></div><div class="ln" style="top:1129.1px;height:28.8px;line-height:28.8px;color:#2c2d32">36</div><div class="code" style="top:1129.1px;height:28.8px;line-height:28.8px"><span class="p">      </span><span class="th">this</span><span class="p">.</span><span class="f">enableDarkMode</span><span class="p">()</span></div><div class="ln" style="top:1157.9px;height:28.8px;line-height:28.8px;color:#2c2d32">37</div><div class="code" style="top:1157.9px;height:28.8px;line-height:28.8px"><span class="p">    }</span></div><div class="ln" style="top:1186.7px;height:28.8px;line-height:28.8px;color:#2c2d32">38</div><div class="code" style="top:1186.7px;height:28.8px;line-height:28.8px"><span class="p">  },</span></div><div class="code" style="left:1027px;top:553.1px;height:28.8px;line-height:28.8px;color:#4a4b51">You, 14 days ago • Update styles for dark mode</div></div></div><div class="abs" style="left:1765.00px;top:90.10px;width:13.45px;height:1.5px;background:#dd5a7c;opacity:0.4"></div><div class="abs" style="left:1767.69px;top:92.79px;width:5.38px;height:1.5px;background:#dd5a7c;opacity:0.4"></div><div class="abs" style="left:1770.38px;top:95.48px;width:6.72px;height:1.5px;background:#e39a84;opacity:0.4"></div><div class="abs" style="left:1777.11px;top:95.48px;width:2.69px;height:1.5px;background:#c9c9c9;opacity:0.4"></div><div class="abs" style="left:1779.80px;top:95.48px;width:5.38px;height:1.5px;background:#e6b38c;opacity:0.4"></div><div class="abs" style="left:1785.17px;top:95.48px;width:1.34px;height:1.5px;background:#c9c9c9;opacity:0.4"></div><div class="abs" style="left:1770.38px;top:98.17px;width:5.38px;height:1.5px;background:#e39a84;opacity:0.4"></div><div class="abs" style="left:1775.76px;top:98.17px;width:1.34px;height:1.5px;background:#c9c9c9;opacity:0.4"></div><div class="abs" style="left:1777.11px;top:98.17px;width:6.72px;height:1.5px;background:#e39a84;opacity:0.4"></div><div class="abs" style="left:1783.83px;top:98.17px;width:2.69px;height:1.5px;background:#c9c9c9;opacity:0.4"></div><div class="abs" style="left:1786.52px;top:98.17px;width:13.45px;height:1.5px;background:#d9577a;opacity:0.4"></div><div class="abs" style="left:1799.97px;top:98.17px;width:1.34px;height:1.5px;background:#c9c9c9;opacity:0.4"></div><div class="abs" style="left:1770.38px;top:100.86px;width:8.07px;height:1.5px;background:#e39a84;opacity:0.4"></div><div class="abs" style="left:1778.45px;top:100.86px;width:1.34px;height:1.5px;background:#c9c9c9;opacity:0.4"></div><div class="abs" style="left:1779.80px;top:100.86px;width:6.72px;height:1.5px;background:#e39a84;opacity:0.4"></div><div class="abs" style="left:1786.52px;top:100.86px;width:2.69px;height:1.5px;background:#c9c9c9;opacity:0.4"></div><div class="abs" style="left:1789.21px;top:100.86px;width:20.18px;height:1.5px;background:#d9577a;opacity:0.4"></div><div class="abs" style="left:1810.73px;top:100.86px;width:1.34px;height:1.5px;background:#9a9a9a;opacity:0.4"></div><div class="abs" style="left:1813.42px;top:100.86px;width:10.76px;height:1.5px;background:#e6b38c;opacity:0.4"></div><div class="abs" style="left:1825.53px;top:100.86px;width:5.38px;height:1.5px;background:#e6b38c;opacity:0.4"></div><div class="abs" style="left:1832.25px;top:100.86px;width:6.72px;height:1.5px;background:#e6b38c;opacity:0.4"></div><div class="abs" style="left:1838.97px;top:100.86px;width:1.34px;height:1.5px;background:#9a9a9a;opacity:0.4"></div><div class="abs" style="left:1841.66px;top:100.86px;width:9.41px;height:1.5px;background:#e6b38c;opacity:0.4"></div><div class="abs" style="left:1852.42px;top:100.86px;width:5.38px;height:1.5px;background:#e6b38c;opacity:0.4"></div><div class="abs" style="left:1859.15px;top:100.86px;width:6.72px;height:1.5px;background:#e6b38c;opacity:0.4"></div><div class="abs" style="left:1865.88px;top:100.86px;width:1.34px;height:1.5px;background:#c9c9c9;opacity:0.4"></div><div class="abs" style="left:1867.22px;top:100.86px;width:1.34px;height:1.5px;background:#dd5a7c;opacity:0.4"></div><div class="abs" style="left:1770.38px;top:103.55px;width:2.69px;height:1.5px;background:#c9c9c9;opacity:0.4"></div><div class="abs" style="left:1774.41px;top:103.55px;width:20.18px;height:1.5px;background:#d9577a;opacity:0.4"></div><div class="abs" style="left:1795.93px;top:103.55px;width:1.34px;height:1.5px;background:#9a9a9a;opacity:0.4"></div><div class="abs" style="left:1798.62px;top:103.55px;width:1.34px;height:1.5px;background:#e6b38c;opacity:0.4"></div><div class="abs" style="left:1802.66px;top:103.55px;width:1.34px;height:1.5px;background:#e6b38c;opacity:0.4"></div><div class="abs" style="left:1804.01px;top:103.55px;width:1.34px;height:1.5px;background:#9a9a9a;opacity:0.4"></div><div class="abs" style="left:1806.69px;top:103.55px;width:1.34px;height:1.5px;background:#e6b38c;opacity:0.4"></div><div class="abs" style="left:1810.73px;top:103.55px;width:1.34px;height:1.5px;background:#e6b38c;opacity:0.4"></div><div class="abs" style="left:1813.42px;top:103.55px;width:2.69px;height:1.5px;background:#c9c9c9;opacity:0.4"></div><div class="abs" style="left:1767.69px;top:106.24px;width:8.07px;height:1.5px;background:#dd5a7c;opacity:0.4"></div><div class="abs" style="left:1765.00px;top:108.93px;width:14.79px;height:1.5px;background:#dd5a7c;opacity:0.4"></div><div class="abs" style="left:1765.00px;top:114.31px;width:10.76px;height:1.5px;background:#dd5a7c;opacity:0.4"></div><div class="abs" style="left:1765.00px;top:117.00px;width:8.07px;height:1.5px;background:#b06fd6;opacity:0.4"></div><div class="abs" style="left:1774.41px;top:117.00px;width:9.41px;height:1.5px;background:#b06fd6;opacity:0.4"></div><div class="abs" style="left:1785.17px;top:117.00px;width:1.34px;height:1.5px;background:#c9c9c9;opacity:0.4"></div><div class="abs" style="left:1767.69px;top:119.69px;width:5.38px;height:1.5px;background:#26a8b8;opacity:0.4"></div><div class="abs" style="left:1773.07px;top:119.69px;width:1.34px;height:1.5px;background:#c9c9c9;opacity:0.4"></div><div class="abs" style="left:1775.76px;top:119.69px;width:2.69px;height:1.5px;background:#c9c9c9;opacity:0.4"></div><div class="abs" style="left:1779.80px;top:119.69px;width:2.69px;height:1.5px;background:#b06fd6;opacity:0.4"></div><div class="abs" style="left:1783.83px;top:119.69px;width:2.69px;height:1.5px;background:#c9c9c9;opacity:0.4"></div><div class="abs" style="left:1770.38px;top:122.38px;width:20.18px;height:1.5px;background:#d9577a;opacity:0.4"></div><div class="abs" style="left:1790.56px;top:122.38px;width:1.34px;height:1.5px;background:#c9c9c9;opacity:0.4"></div><div class="abs" style="left:1793.24px;top:122.38px;width:6.72px;height:1.5px;background:#de8d7c;opacity:0.4"></div><div class="abs" style="left:1799.97px;top:122.38px;width:1.34px;height:1.5px;background:#c9c9c9;opacity:0.4"></div><div class="abs" style="left:1767.69px;top:125.07px;width:4.04px;height:1.5px;background:#c9c9c9;opacity:0.4"></div><div class="abs" style="left:1767.69px;top:127.76px;width:9.41px;height:1.5px;background:#d9577a;opacity:0.4"></div><div class="abs" style="left:1777.11px;top:127.76px;width:1.34px;height:1.5px;background:#c9c9c9;opacity:0.4"></div><div class="abs" style="left:1779.80px;top:127.76px;width:1.34px;height:1.5px;background:#c9c9c9;opacity:0.4"></div><div class="abs" style="left:1770.38px;top:130.45px;width:18.83px;height:1.5px;background:#26a8b8;opacity:0.4"></div><div class="abs" style="left:1789.21px;top:130.45px;width:1.34px;height:1.5px;background:#c9c9c9;opacity:0.4"></div><div class="abs" style="left:1791.90px;top:130.45px;width:10.76px;height:1.5px;background:#b06fd6;opacity:0.4"></div><div class="abs" style="left:1802.66px;top:130.45px;width:2.69px;height:1.5px;background:#c9c9c9;opacity:0.4"></div><div class="abs" style="left:1773.07px;top:133.14px;width:10.76px;height:1.5px;background:#d9577a;opacity:0.4"></div><div class="abs" style="left:1783.83px;top:133.14px;width:1.34px;height:1.5px;background:#c9c9c9;opacity:0.4"></div><div class="abs" style="left:1785.17px;top:133.14px;width:20.18px;height:1.5px;background:#d9577a;opacity:0.4"></div><div class="abs" style="left:1805.35px;top:133.14px;width:1.34px;height:1.5px;background:#c9c9c9;opacity:0.4"></div><div class="abs" style="left:1806.69px;top:133.14px;width:12.11px;height:1.5px;background:#d9577a;opacity:0.4"></div><div class="abs" style="left:1818.80px;top:133.14px;width:1.34px;height:1.5px;background:#c9c9c9;opacity:0.4"></div><div class="abs" style="left:1820.14px;top:133.14px;width:4.04px;height:1.5px;background:#26a8b8;opacity:0.4"></div><div class="abs" style="left:1824.18px;top:133.14px;width:1.34px;height:1.5px;background:#c9c9c9;opacity:0.4"></div><div class="abs" style="left:1825.53px;top:133.14px;width:8.07px;height:1.5px;background:#e6b38c;opacity:0.4"></div><div class="abs" style="left:1833.60px;top:133.14px;width:1.34px;height:1.5px;background:#c9c9c9;opacity:0.4"></div><div class="abs" style="left:1773.07px;top:135.83px;width:16.14px;height:1.5px;background:#d9577a;opacity:0.4"></div><div class="abs" style="left:1789.21px;top:135.83px;width:1.34px;height:1.5px;background:#c9c9c9;opacity:0.4"></div><div class="abs" style="left:1790.56px;top:135.83px;width:9.41px;height:1.5px;background:#26a8b8;opacity:0.4"></div><div class="abs" style="left:1799.97px;top:135.83px;width:1.34px;height:1.5px;background:#c9c9c9;opacity:0.4"></div><div class="abs" style="left:1801.32px;top:135.83px;width:8.07px;height:1.5px;background:#e6b38c;opacity:0.4"></div><div class="abs" style="left:1809.38px;top:135.83px;width:1.34px;height:1.5px;background:#c9c9c9;opacity:0.4"></div><div class="abs" style="left:1812.08px;top:135.83px;width:8.07px;height:1.5px;background:#e6b38c;opacity:0.4"></div><div class="abs" style="left:1820.14px;top:135.83px;width:1.34px;height:1.5px;background:#c9c9c9;opacity:0.4"></div><div class="abs" style="left:1773.07px;top:138.52px;width:5.38px;height:1.5px;background:#e6b38c;opacity:0.4"></div><div class="abs" style="left:1778.45px;top:138.52px;width:1.34px;height:1.5px;background:#c9c9c9;opacity:0.4"></div><div class="abs" style="left:1779.80px;top:138.52px;width:20.18px;height:1.5px;background:#d9577a;opacity:0.4"></div><div class="abs" style="left:1801.32px;top:138.52px;width:1.34px;height:1.5px;background:#c9c9c9;opacity:0.4"></div><div class="abs" style="left:1804.01px;top:138.52px;width:5.38px;height:1.5px;background:#de8d7c;opacity:0.4"></div><div class="abs" style="left:1773.07px;top:141.21px;width:1.34px;height:1.5px;background:#c9c9c9;opacity:0.4"></div><div class="abs" style="left:1770.38px;top:143.90px;width:20.18px;height:1.5px;background:#26a8b8;opacity:0.4"></div><div class="abs" style="left:1790.56px;top:143.90px;width:1.34px;height:1.5px;background:#c9c9c9;opacity:0.4"></div><div class="abs" style="left:1793.24px;top:143.90px;width:10.76px;height:1.5px;background:#b06fd6;opacity:0.4"></div><div class="abs" style="left:1804.01px;top:143.90px;width:4.04px;height:1.5px;background:#c9c9c9;opacity:0.4"></div><div class="abs" style="left:1773.07px;top:146.59px;width:10.76px;height:1.5px;background:#d9577a;opacity:0.4"></div><div class="abs" style="left:1783.83px;top:146.59px;width:1.34px;height:1.5px;background:#c9c9c9;opacity:0.4"></div><div class="abs" style="left:1785.17px;top:146.59px;width:20.18px;height:1.5px;background:#d9577a;opacity:0.4"></div><div class="abs" style="left:1805.35px;top:146.59px;width:1.34px;height:1.5px;background:#c9c9c9;opacity:0.4"></div><div class="abs" style="left:1806.69px;top:146.59px;width:12.11px;height:1.5px;background:#d9577a;opacity:0.4"></div><div class="abs" style="left:1818.80px;top:146.59px;width:1.34px;height:1.5px;background:#c9c9c9;opacity:0.4"></div><div class="abs" style="left:1820.14px;top:146.59px;width:8.07px;height:1.5px;background:#26a8b8;opacity:0.4"></div><div class="abs" style="left:1828.21px;top:146.59px;width:1.34px;height:1.5px;background:#c9c9c9;opacity:0.4"></div><div class="abs" style="left:1829.56px;top:146.59px;width:8.07px;height:1.5px;background:#e6b38c;opacity:0.4"></div><div class="abs" style="left:1837.63px;top:146.59px;width:1.34px;height:1.5px;background:#c9c9c9;opacity:0.4"></div><div class="abs" style="left:1773.07px;top:149.28px;width:16.14px;height:1.5px;background:#d9577a;opacity:0.4"></div><div class="abs" style="left:1789.21px;top:149.28px;width:1.34px;height:1.5px;background:#c9c9c9;opacity:0.4"></div><div class="abs" style="left:1790.56px;top:149.28px;width:9.41px;height:1.5px;background:#26a8b8;opacity:0.4"></div><div class="abs" style="left:1799.97px;top:149.28px;width:1.34px;height:1.5px;background:#c9c9c9;opacity:0.4"></div><div class="abs" style="left:1801.32px;top:149.28px;width:8.07px;height:1.5px;background:#e6b38c;opacity:0.4"></div><div class="abs" style="left:1809.38px;top:149.28px;width:1.34px;height:1.5px;background:#c9c9c9;opacity:0.4"></div><div class="abs" style="left:1812.08px;top:149.28px;width:9.41px;height:1.5px;background:#e6b38c;opacity:0.4"></div><div class="abs" style="left:1821.49px;top:149.28px;width:1.34px;height:1.5px;background:#c9c9c9;opacity:0.4"></div><div class="abs" style="left:1773.07px;top:151.97px;width:5.38px;height:1.5px;background:#e6b38c;opacity:0.4"></div><div class="abs" style="left:1778.45px;top:151.97px;width:1.34px;height:1.5px;background:#c9c9c9;opacity:0.4"></div><div class="abs" style="left:1779.80px;top:151.97px;width:20.18px;height:1.5px;background:#d9577a;opacity:0.4"></div><div class="abs" style="left:1801.32px;top:151.97px;width:1.34px;height:1.5px;background:#c9c9c9;opacity:0.4"></div><div class="abs" style="left:1804.01px;top:151.97px;width:6.72px;height:1.5px;background:#de8d7c;opacity:0.4"></div><div class="abs" style="left:1770.38px;top:154.66px;width:2.69px;height:1.5px;background:#c9c9c9;opacity:0.4"></div><div class="abs" style="left:1770.38px;top:157.35px;width:13.45px;height:1.5px;background:#26a8b8;opacity:0.4"></div><div class="abs" style="left:1783.83px;top:157.35px;width:1.34px;height:1.5px;background:#c9c9c9;opacity:0.4"></div><div class="abs" style="left:1786.52px;top:157.35px;width:10.76px;height:1.5px;background:#b06fd6;opacity:0.4"></div><div class="abs" style="left:1797.28px;top:157.35px;width:2.69px;height:1.5px;background:#c9c9c9;opacity:0.4"></div><div class="abs" style="left:1801.32px;top:157.35px;width:1.34px;height:1.5px;background:#c9c9c9;opacity:0.4"></div><div class="abs" style="left:1773.07px;top:160.04px;width:2.69px;height:1.5px;background:#b06fd6;opacity:0.4"></div><div class="abs" style="left:1777.11px;top:160.04px;width:1.34px;height:1.5px;background:#c9c9c9;opacity:0.4"></div><div class="abs" style="left:1778.45px;top:160.04px;width:5.38px;height:1.5px;background:#e6b38c;opacity:0.4"></div><div class="abs" style="left:1783.83px;top:160.04px;width:1.34px;height:1.5px;background:#c9c9c9;opacity:0.4"></div><div class="abs" style="left:1785.17px;top:160.04px;width:20.18px;height:1.5px;background:#d9577a;opacity:0.4"></div><div class="abs" style="left:1805.35px;top:160.04px;width:1.34px;height:1.5px;background:#c9c9c9;opacity:0.4"></div><div class="abs" style="left:1808.04px;top:160.04px;width:1.34px;height:1.5px;background:#c9c9c9;opacity:0.4"></div><div class="abs" style="left:1775.76px;top:162.73px;width:5.38px;height:1.5px;background:#e6b38c;opacity:0.4"></div><div class="abs" style="left:1781.14px;top:162.73px;width:1.34px;height:1.5px;background:#c9c9c9;opacity:0.4"></div><div class="abs" style="left:1782.48px;top:162.73px;width:20.18px;height:1.5px;background:#26a8b8;opacity:0.4"></div><div class="abs" style="left:1802.66px;top:162.73px;width:2.69px;height:1.5px;background:#c9c9c9;opacity:0.4"></div><div class="abs" style="left:1773.07px;top:165.42px;width:1.34px;height:1.5px;background:#c9c9c9;opacity:0.4"></div><div class="abs" style="left:1775.76px;top:165.42px;width:5.38px;height:1.5px;background:#b06fd6;opacity:0.4"></div><div class="abs" style="left:1782.48px;top:165.42px;width:1.34px;height:1.5px;background:#c9c9c9;opacity:0.4"></div><div class="abs" style="left:1775.76px;top:168.11px;width:5.38px;height:1.5px;background:#e6b38c;opacity:0.4"></div><div class="abs" style="left:1781.14px;top:168.11px;width:1.34px;height:1.5px;background:#c9c9c9;opacity:0.4"></div><div class="abs" style="left:1782.48px;top:168.11px;width:18.83px;height:1.5px;background:#26a8b8;opacity:0.4"></div><div class="abs" style="left:1801.32px;top:168.11px;width:2.69px;height:1.5px;background:#c9c9c9;opacity:0.4"></div><div class="abs" style="left:1773.07px;top:170.80px;width:1.34px;height:1.5px;background:#c9c9c9;opacity:0.4"></div><div class="abs" style="left:1770.38px;top:173.49px;width:2.69px;height:1.5px;background:#c9c9c9;opacity:0.4"></div><div class="abs" style="left:1767.69px;top:176.18px;width:2.69px;height:1.5px;background:#c9c9c9;opacity:0.4"></div><div class="abs" style="left:1767.69px;top:178.87px;width:14.79px;height:1.5px;background:#26a8b8;opacity:0.4"></div><div class="abs" style="left:1782.48px;top:178.87px;width:1.34px;height:1.5px;background:#c9c9c9;opacity:0.4"></div><div class="abs" style="left:1785.17px;top:178.87px;width:10.76px;height:1.5px;background:#b06fd6;opacity:0.4"></div><div class="abs" style="left:1795.93px;top:178.87px;width:2.69px;height:1.5px;background:#c9c9c9;opacity:0.4"></div><div class="abs" style="left:1799.97px;top:178.87px;width:1.34px;height:1.5px;background:#c9c9c9;opacity:0.4"></div><div class="abs" style="left:1770.38px;top:181.56px;width:2.69px;height:1.5px;background:#b06fd6;opacity:0.4"></div><div class="abs" style="left:1774.41px;top:181.56px;width:1.34px;height:1.5px;background:#c9c9c9;opacity:0.4"></div><div class="abs" style="left:1775.76px;top:181.56px;width:16.14px;height:1.5px;background:#d9577a;opacity:0.4"></div><div class="abs" style="left:1791.90px;top:181.56px;width:1.34px;height:1.5px;background:#c9c9c9;opacity:0.4"></div><div class="abs" style="left:1793.24px;top:181.56px;width:9.41px;height:1.5px;background:#26a8b8;opacity:0.4"></div><div class="abs" style="left:1802.66px;top:181.56px;width:1.34px;height:1.5px;background:#c9c9c9;opacity:0.4"></div><div class="abs" style="left:1804.01px;top:181.56px;width:8.07px;height:1.5px;background:#e6b38c;opacity:0.4"></div><div class="abs" style="left:1812.08px;top:181.56px;width:1.34px;height:1.5px;background:#c9c9c9;opacity:0.4"></div><div class="abs" style="left:1814.77px;top:181.56px;width:4.04px;height:1.5px;background:#c9c9c9;opacity:0.4"></div><div class="abs" style="left:1820.14px;top:181.56px;width:8.07px;height:1.5px;background:#e6b38c;opacity:0.4"></div><div class="abs" style="left:1828.21px;top:181.56px;width:1.34px;height:1.5px;background:#c9c9c9;opacity:0.4"></div><div class="abs" style="left:1830.90px;top:181.56px;width:1.34px;height:1.5px;background:#c9c9c9;opacity:0.4"></div><div class="abs" style="left:1773.07px;top:184.25px;width:5.38px;height:1.5px;background:#e6b38c;opacity:0.4"></div><div class="abs" style="left:1778.45px;top:184.25px;width:1.34px;height:1.5px;background:#c9c9c9;opacity:0.4"></div><div class="abs" style="left:1779.80px;top:184.25px;width:18.83px;height:1.5px;background:#26a8b8;opacity:0.4"></div><div class="abs" style="left:1798.62px;top:184.25px;width:2.69px;height:1.5px;background:#c9c9c9;opacity:0.4"></div><div class="abs" style="left:1770.38px;top:186.94px;width:1.34px;height:1.5px;background:#c9c9c9;opacity:0.4"></div><div class="abs" style="left:1767.69px;top:189.63px;width:2.69px;height:1.5px;background:#c9c9c9;opacity:0.4"></div><div class="abs" style="left:1765.00px;top:192.32px;width:1.34px;height:1.5px;background:#c9c9c9;opacity:0.4"></div><div class="abs" style="left:1765.00px;top:195.01px;width:12.11px;height:1.5px;background:#dd5a7c;opacity:0.4"></div><div class="abs" style="left:1765.00px;top:200.39px;width:9.41px;height:1.5px;background:#dd5a7c;opacity:0.4"></div><div class="abs" style="left:1765.00px;top:203.08px;width:6.72px;height:1.5px;background:#d9577a;opacity:0.4"></div><div class="abs" style="left:1773.07px;top:203.08px;width:1.34px;height:1.5px;background:#c9c9c9;opacity:0.4"></div><div class="abs" style="left:1767.69px;top:205.77px;width:9.41px;height:1.5px;background:#c9c9c9;opacity:0.4"></div><div class="abs" style="left:1778.45px;top:205.77px;width:6.72px;height:1.5px;background:#e6b38c;opacity:0.4"></div><div class="abs" style="left:1785.17px;top:205.77px;width:1.34px;height:1.5px;background:#c9c9c9;opacity:0.4"></div><div class="abs" style="left:1767.69px;top:208.46px;width:12.11px;height:1.5px;background:#c9c9c9;opacity:0.4"></div><div class="abs" style="left:1781.14px;top:208.46px;width:6.72px;height:1.5px;background:#e6b38c;opacity:0.4"></div><div class="abs" style="left:1787.87px;top:208.46px;width:1.34px;height:1.5px;background:#c9c9c9;opacity:0.4"></div><div class="abs" style="left:1767.69px;top:211.15px;width:9.41px;height:1.5px;background:#c9c9c9;opacity:0.4"></div><div class="abs" style="left:1778.45px;top:211.15px;width:9.41px;height:1.5px;background:#e6b38c;opacity:0.4"></div><div class="abs" style="left:1787.87px;top:211.15px;width:1.34px;height:1.5px;background:#c9c9c9;opacity:0.4"></div><div class="abs" style="left:1767.69px;top:213.84px;width:16.14px;height:1.5px;background:#c9c9c9;opacity:0.4"></div><div class="abs" style="left:1785.17px;top:213.84px;width:5.38px;height:1.5px;background:#e6b38c;opacity:0.4"></div><div class="abs" style="left:1790.56px;top:213.84px;width:1.34px;height:1.5px;background:#c9c9c9;opacity:0.4"></div><div class="abs" style="left:1765.00px;top:216.53px;width:1.34px;height:1.5px;background:#c9c9c9;opacity:0.4"></div><div class="abs" style="left:1765.00px;top:219.22px;width:8.07px;height:1.5px;background:#b06fd6;opacity:0.4"></div><div class="abs" style="left:1774.41px;top:219.22px;width:5.38px;height:1.5px;background:#b06fd6;opacity:0.4"></div><div class="abs" style="left:1781.14px;top:219.22px;width:8.07px;height:1.5px;background:#e6b38c;opacity:0.4"></div><div class="abs" style="left:1790.56px;top:219.22px;width:4.04px;height:1.5px;background:#b06fd6;opacity:0.4"></div><div class="abs" style="left:1795.93px;top:219.22px;width:1.34px;height:1.5px;background:#c9c9c9;opacity:0.4"></div><div class="abs" style="left:1797.28px;top:219.22px;width:12.11px;height:1.5px;background:#d9577a;opacity:0.4"></div><div class="abs" style="left:1809.38px;top:219.22px;width:1.34px;height:1.5px;background:#c9c9c9;opacity:0.4"></div><div class="abs" style="left:1812.08px;top:219.22px;width:6.72px;height:1.5px;background:#e6b38c;opacity:0.4"></div><div class="abs" style="left:1818.80px;top:219.22px;width:1.34px;height:1.5px;background:#c9c9c9;opacity:0.4"></div><div class="abs" style="left:1821.49px;top:219.22px;width:1.34px;height:1.5px;background:#c9c9c9;opacity:0.4"></div><div class="abs" style="left:1767.69px;top:221.91px;width:6.72px;height:1.5px;background:#d9577a;opacity:0.4"></div><div class="abs" style="left:1775.76px;top:221.91px;width:1.34px;height:1.5px;background:#c9c9c9;opacity:0.4"></div><div class="abs" style="left:1770.38px;top:224.60px;width:10.76px;height:1.5px;background:#c9c9c9;opacity:0.4"></div><div class="abs" style="left:1782.48px;top:224.60px;width:6.72px;height:1.5px;background:#e6b38c;opacity:0.4"></div><div class="abs" style="left:1789.21px;top:224.60px;width:1.34px;height:1.5px;background:#c9c9c9;opacity:0.4"></div><div class="abs" style="left:1767.69px;top:227.29px;width:1.34px;height:1.5px;background:#c9c9c9;opacity:0.4"></div><div class="abs" style="left:1765.00px;top:229.98px;width:1.34px;height:1.5px;background:#c9c9c9;opacity:0.4"></div><div class="abs" style="left:1765.00px;top:232.67px;width:10.76px;height:1.5px;background:#dd5a7c;opacity:0.4"></div><div class="abs" style="left:1899px;top:90px;width:21px;height:1px;background:#1c1d22"></div><div class="abs" style="left:1905px;top:280px;width:8px;height:10.5px;background:#6e6f74"></div><div class="abs" style="left:1899px;top:277.8px;width:21px;height:2.5px;background:#d3456f"></div><div class="abs" style="left:1905px;top:326px;width:8px;height:12px;background:#6e6f74"></div><svg class="abs" style="left:1660px;top:0" width="260" height="56" viewBox="1660 0 260 56" fill="none" stroke="#c6c6c6" stroke-width="1.8">
 <circle cx="1679" cy="20.2" r="2.4"/><circle cx="1693.6" cy="34.5" r="2.4"/>
 <path d="M1679 22.6 V32 Q1679 34.5 1681.5 34.5 H1687.5 M1684.3 31.3 L1687.5 34.5 L1684.3 37.7" stroke-linejoin="round"/>
 <path d="M1693.6 32.1 V22.5 Q1693.6 20 1691.1 20 H1685 M1688.2 16.8 L1685 20 L1688.2 23.2" stroke-linejoin="round"/>
 <circle cx="1740.4" cy="28" r="5.2" stroke-width="2.8"/>
 <path d="M1734.5 28 H1727.5 M1732.5 22 L1726.5 28 L1732.5 34 M1745 28 H1749.5" stroke-width="3.4"/>
 <path d="M1788.7 16 L1801 28.3 L1788.7 40.6 L1776.4 28.3 Z" fill="#c6c6c6" stroke="#c6c6c6" stroke-width="1" stroke-linejoin="round"/>
 <path d="M1785.5 19.5 L1789.5 23.5 V33 M1789.5 23.5 L1794.5 28.5" stroke="#0c0d11" stroke-width="1.6"/>
 <circle cx="1789.5" cy="33.5" r="1.8" fill="#0c0d11" stroke="none"/><circle cx="1794.8" cy="28.8" r="1.8" fill="#0c0d11" stroke="none"/><circle cx="1789.5" cy="23.5" r="1.4" fill="#0c0d11" stroke="none"/>
 <rect x="1830.5" y="17" width="20" height="20.5" rx="1.5" stroke-width="2"/>
 <path d="M1840.5 17 V37.5" stroke-width="2"/>
 <circle cx="1883.3" cy="27.6" r="1.8" fill="#c6c6c6" stroke="none"/><circle cx="1891.3" cy="27.6" r="1.8" fill="#c6c6c6" stroke="none"/><circle cx="1899.3" cy="27.6" r="1.8" fill="#c6c6c6" stroke="none"/>
</svg><div id="status">
<svg class="abs" style="left:0;top:0" width="280" height="35" viewBox="0 1165 280 35" fill="none" stroke="#818286" stroke-width="1.8">
 <circle cx="26.6" cy="1175" r="2.4"/><circle cx="26.6" cy="1189.5" r="2.4"/><circle cx="35.5" cy="1178.6" r="2.4"/>
 <path d="M26.6 1177.4 V1187.1 M35.5 1181 Q35.5 1184.5 31 1185 Q27 1185.5 26.6 1187.5"/>
 <path d="M153.5 1179 A8 8 0 0 0 139.5 1180.5 M140 1186 A8 8 0 0 0 154 1184.5" stroke-width="2.4"/>
 <path d="M154.5 1174 V1180 H148.5 Z M139 1191 V1185 H145 Z" fill="#818286" stroke="none"/>
 <circle cx="192" cy="1182" r="10" fill="#818286" stroke="none"/>
 <path d="M187.8 1177.8 L196.2 1186.2 M196.2 1177.8 L187.8 1186.2" stroke="#0c0d10" stroke-width="2.4"/>
 <path d="M236 1173.5 L245.5 1191 H226.5 Z" fill="#818286" stroke="#818286" stroke-width="2" stroke-linejoin="round"/>
 <path d="M236 1178.5 V1185.5" stroke="#0c0d10" stroke-width="2.2"/><circle cx="236" cy="1188.5" r="1.2" fill="#0c0d10" stroke="none"/>
</svg>
<span class="abs" style="left:44px;top:7.5px">master*</span>
<span class="abs" style="left:208px;top:7.5px">0</span>
<span class="abs" style="left:253px;top:7.5px">0</span>
<svg class="abs" style="left:1060px;top:0" width="860" height="35" viewBox="1060 1165 860 35" fill="none" stroke="#818286" stroke-width="2.2">
 <circle cx="1076.5" cy="1182.5" r="4.6" stroke-width="2.6"/><path d="M1067 1182.5 H1071.8 M1081.2 1182.5 H1086" stroke-width="2.6"/>
 <path d="M1712.70 1189.51 A9.8 9.8 0 1 1 1725.30 1189.51 M1715.27 1186.44 A5.8 5.8 0 1 1 1722.73 1186.44" stroke-width="1.8"/>
 <circle cx="1719" cy="1181.5" r="2.2" fill="#818286" stroke="none"/><path d="M1719 1184.5 V1193" stroke-width="2.8"/>
 <circle cx="1839" cy="1182" r="10" fill="#818286" stroke="none"/>
 <circle cx="1835.5" cy="1179" r="1.6" fill="#0c0d10" stroke="none"/><circle cx="1842.5" cy="1179" r="1.6" fill="#0c0d10" stroke="none"/>
 <path d="M1833.5 1184.5 Q1839 1189.5 1844.5 1184.5" stroke="#0c0d10" stroke-width="1.8"/>
 <path d="M1875.5 1189.5 Q1879.5 1186.5 1879.5 1180.5 Q1879.5 1173 1885 1173 Q1890.5 1173 1890.5 1180.5 Q1890.5 1186.5 1894.5 1189.5 Z" fill="#818286" stroke="none"/>
 <circle cx="1885" cy="1191" r="2.2" fill="#818286" stroke="none"/>
</svg>
<span class="abs" style="left:1092px;top:7.5px">You, 14 days ago</span>
<span class="abs" style="left:1266px;top:7.5px">Ln 16, Col 32</span>
<span class="abs" style="left:1407px;top:7.5px">Spaces: 2</span>
<span class="abs" style="left:1519px;top:7.5px">UTF-8</span>
<span class="abs" style="left:1603px;top:7.5px">LF</span>
<span class="abs" style="left:1649px;top:7.5px">Vue</span>
<span class="abs" style="left:1737px;top:7.5px">Go Live</span>
</div></div></body></html>
